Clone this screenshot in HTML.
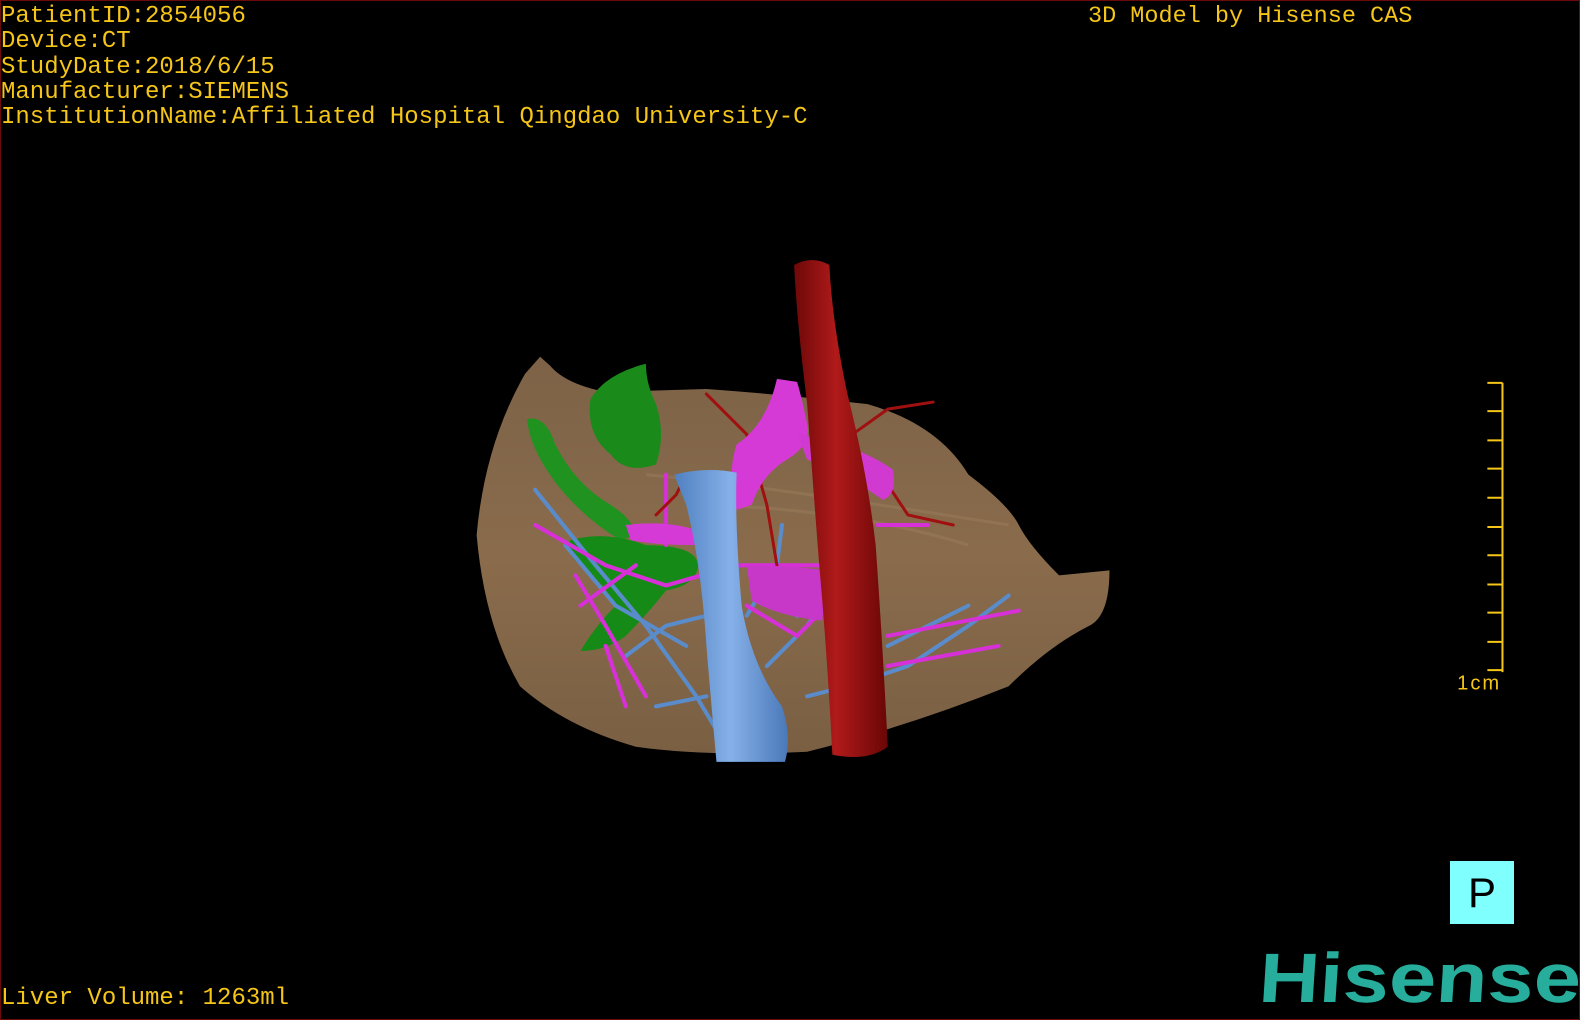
<!DOCTYPE html>
<html><head><meta charset="utf-8"><style>
html,body{margin:0;padding:0;background:#000;}
#f{position:relative;width:1580px;height:1020px;background:#000;overflow:hidden;box-sizing:border-box;border:1px solid #6a0a0a;}
.t{position:absolute;font-family:"Liberation Mono",monospace;font-size:24px;color:#f5c518;white-space:pre;line-height:25.3px;}
</style></head><body><div id="f">
<div class="t" style="left:0;top:3px">PatientID:2854056
Device:CT
StudyDate:2018/6/15
Manufacturer:SIEMENS
InstitutionName:Affiliated Hospital Qingdao University-C</div>
<div class="t" style="left:1087px;top:3px;font-size:23.5px">3D Model by Hisense CAS</div>
<div class="t" style="left:0;top:985px;font-size:24px">Liver Volume: 1263ml</div>
<svg width="1580" height="1020" style="position:absolute;left:0;top:0">
<defs>
<linearGradient id="lv" x1="0" y1="0" x2="0" y2="1"><stop offset="0" stop-color="#7d6247"/><stop offset=".5" stop-color="#8a6c4c"/><stop offset="1" stop-color="#7a5f43"/></linearGradient>
<linearGradient id="ao" x1="0" y1="0" x2="1" y2="0"><stop offset="0" stop-color="#6e0808"/><stop offset=".45" stop-color="#b01a1a"/><stop offset="1" stop-color="#6a0606"/></linearGradient>
<linearGradient id="iv" x1="0" y1="0" x2="1" y2="0"><stop offset="0" stop-color="#4f80c0"/><stop offset=".5" stop-color="#86b0e8"/><stop offset="1" stop-color="#4a78b8"/></linearGradient>
</defs>
<g transform="scale(1.0077)">
<path d="M535 353 L545 362 Q560 380 600 388 L700 385 Q770 390 860 400 Q930 420 960 470 Q1000 500 1010 520 Q1020 540 1050 570 L1100 565 Q1100 610 1080 620 Q1040 640 1000 680 Q900 720 800 745 Q700 750 630 740 Q560 720 515 680 Q480 620 472 530 Q480 440 520 370 Z" fill="url(#lv)"/>
<g stroke="#9a7d5c" stroke-width="3" fill="none" opacity=".5"><path d="M640 470 Q750 480 1000 520"/><path d="M700 500 Q850 505 960 540"/></g>
<!-- green -->
<path d="M640 360 Q600 370 585 395 Q580 430 605 450 Q620 470 650 460 Q660 430 650 400 Q640 380 640 360Z" fill="#1a8a1a"/>
<path d="M522 415 Q540 410 550 440 Q570 480 605 500 Q628 515 630 530 L615 535 Q580 515 552 480 Q525 445 522 415Z" fill="#1f921f"/>
<path d="M565 535 Q600 525 640 540 Q690 540 692 560 Q690 580 660 585 Q640 610 620 630 Q600 645 575 645 Q590 620 610 600 Q600 580 575 560 Q560 548 565 535Z" fill="#168a16"/>
<!-- thin branches -->
<g fill="none" stroke-linecap="round">
<g stroke="#5a8ccc" stroke-width="4">
<path d="M530 485 L590 560 L640 620 L690 690 L720 740"/><path d="M560 540 L610 600 L680 640"/><path d="M620 650 L660 620 L700 610"/><path d="M650 700 L700 690"/><path d="M760 660 L800 620 L820 590"/><path d="M800 690 L840 680 L900 660 L960 620 L1000 590"/><path d="M880 640 L960 600"/><path d="M790 610 L760 590"/><path d="M740 610 L770 560 L775 520"/>
</g>
<g stroke="#d830d8" stroke-width="4">
<path d="M530 520 L600 560 L660 580 L730 560 L820 560"/><path d="M575 600 L630 560"/><path d="M570 570 L600 620 L640 690"/><path d="M880 630 L1010 605"/><path d="M880 660 L990 640"/><path d="M870 520 L920 520"/><path d="M660 470 L660 540"/><path d="M740 600 L790 630 L820 600"/><path d="M600 640 L620 700"/>
</g>
<g stroke="#a01010" stroke-width="3"><path d="M700 390 L740 430 L760 500 L770 560"/><path d="M845 430 L880 405 L925 398"/><path d="M880 480 L900 510 L945 520"/><path d="M650 510 L670 490 L680 470"/></g>
</g>
<!-- magenta -->
<path d="M770 375 L790 378 Q795 395 800 420 Q805 440 780 455 Q755 470 745 500 L730 505 Q720 470 730 440 Q760 420 770 375Z" fill="#d63ad6"/>
<path d="M790 430 Q850 440 885 465 Q890 490 875 495 Q840 470 800 455Z" fill="#d03ad0"/>
<path d="M740 560 Q780 560 820 565 L815 615 Q770 610 745 595Z" fill="#c838c8"/>
<path d="M620 520 Q660 515 690 525 L690 540 Q650 540 625 535Z" fill="#d63ad6"/>
<!-- IVC -->
<path d="M668 470 Q700 462 730 468 Q728 520 735 600 Q745 660 775 700 Q785 730 778 755 L710 755 Q705 700 700 640 Q695 560 680 500 Z" fill="url(#iv)"/>
<!-- aorta -->
<path d="M787 262 Q805 252 822 262 Q825 320 840 390 Q860 470 868 540 Q875 640 880 740 Q860 755 825 748 Q820 650 812 560 Q805 470 800 400 Q790 320 787 262Z" fill="url(#ao)"/>
<!-- scale -->
<g stroke="#f5c518" stroke-width="2">
<line x1="1490" y1="379" x2="1490" y2="666"/>
<path d="M1475 379H1490M1475 407H1490M1475 436H1490M1475 464H1490M1475 493H1490M1475 522H1490M1475 550H1490M1475 579H1490M1475 607H1490M1475 636H1490M1475 664H1490"/>
</g>
<text x="1445" y="683" font-family="Liberation Sans,sans-serif" font-size="20" letter-spacing="2" fill="#f5c518">1cm</text>
</g>
</svg>
<div style="position:absolute;left:1449px;top:860px;width:64px;height:63px;background:#80ffff;font-family:'Liberation Sans',sans-serif;font-size:42px;line-height:63px;text-align:center;color:#000;">P</div>
<div style="position:absolute;left:1250px;top:937px;font-family:'Liberation Sans',sans-serif;font-weight:bold;font-style:italic;font-size:70px;line-height:80px;color:#27ad9c;transform:scaleX(1.2) skewX(8deg);transform-origin:0 0;">Hisense</div>
</div></body></html>
